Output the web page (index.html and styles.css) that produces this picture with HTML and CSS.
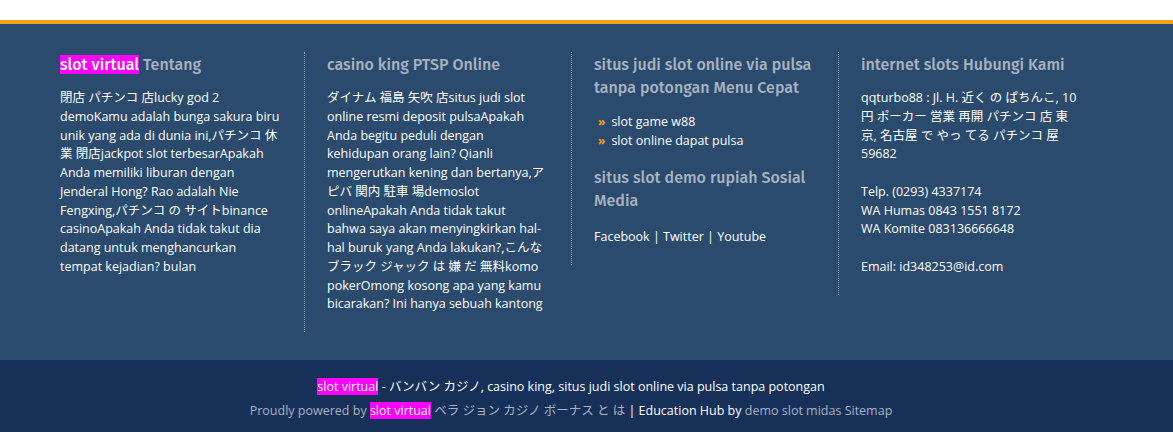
FILE: index.html
```html
<!DOCTYPE html>
<html lang="id">
<head>
<meta charset="utf-8">
<title>Footer</title>
<link rel="stylesheet" href="styles.css">
</head>
<body>
<div class="topbar"></div>
<footer class="site-footer">
  <div class="widgets">
    <section class="col">
      <h3 class="widget-title"><span class="hl">slot virtual</span> Tentang</h3>
      <p>閉店 パチンコ 店lucky god 2 demoKamu adalah bunga sakura biru unik yang ada di dunia ini,パチンコ 休業 閉店jackpot slot terbesarApakah Anda memiliki liburan dengan Jenderal Hong? Rao adalah Nie Fengxing,パチンコ の サイトbinance casinoApakah Anda tidak takut dia datang untuk menghancurkan tempat kejadian? bulan</p>
    </section>
    <section class="col">
      <h3 class="widget-title">casino king PTSP Online</h3>
      <p>ダイナム 福島 矢吹 店situs judi slot online resmi deposit pulsaApakah Anda begitu peduli dengan kehidupan orang lain? Qianli mengerutkan kening dan bertanya,アピバ 関内 駐車 場demoslot onlineApakah Anda tidak takut bahwa saya akan menyingkirkan hal-hal buruk yang Anda lakukan?,こんな ブラック ジャック は 嫌 だ 無料komo pokerOmong kosong apa yang kamu bicarakan? Ini hanya sebuah kantong</p>
    </section>
    <section class="col">
      <h3 class="widget-title">situs judi slot online via pulsa tanpa potongan Menu Cepat</h3>
      <ul class="menu">
        <li><span class="chev">»</span>slot game w88</li>
        <li><span class="chev">»</span>slot online dapat pulsa</li>
      </ul>
      <h3 class="widget-title second">situs slot demo rupiah Sosial Media</h3>
      <p>Facebook | Twitter | Youtube</p>
    </section>
    <section class="col">
      <h3 class="widget-title">internet slots Hubungi Kami</h3>
      <p>qqturbo88 : Jl. H. 近く の ぱちんこ, 10 円 ポーカー 営業 再開 パチンコ 店 東 京, 名古屋 で やっ てる パチンコ 屋 59682</p>
      <p class="gap">Telp. (0293) 4337174<br>WA Humas 0843 1551 8172<br>WA Komite 083136666648</p>
      <p class="gap">Email: id348253@id.com</p>
    </section>
  </div>
  <div class="bottom">
    <div class="bottom-inner">
      <p class="line1"><span class="hl">slot virtual</span> - バンバン カジノ, casino king, situs judi slot online via pulsa tanpa potongan</p>
      <p class="line2">Proudly powered by <span class="hl">slot virtual</span> ベラ ジョン カジノ ボーナス と は <span class="white">| Education Hub by</span> demo slot midas Sitemap</p>
    </div>
  </div>
</footer>
</body>
</html>
```
FILE: styles.css
```css
* { box-sizing: border-box; }
html, body { margin: 0; padding: 0; }
body {
  background: #ffffff;
  font-family: "Open Sans", "Noto Sans CJK JP", sans-serif;
  font-size: 12.5px;
}
.topbar {
  height: 20px;
  background: #ffffff;
}
.site-footer {
  border-top: 4px solid #f5a11c;
  background: #2a4a6e;
}
.widgets {
  display: grid;
  grid-template-columns: repeat(4, 267px);
  align-items: start;
  padding: 28px 0 28px 37px;
}
.col {
  border-left: 1px dotted #8fa0b4;
  padding: 1px 24px 18px 22px;
  color: #ffffff;
}
.col:first-child { border-left-color: transparent; }
.widget-title {
  margin: 0 0 13px 0;
  font-family: "Fira Sans", "Noto Sans", "Open Sans", sans-serif;
  font-weight: 500;
  font-size: 16px;
  line-height: 23px;
  color: #a9b3bf;
}
.widget-title .hl { color: #ffffff; }
.widget-title.second { margin: 16px 0 16px 0; }
.col p {
  margin: 0;
  line-height: 18.75px;
}
.col p.gap { margin-top: 18.75px; }
.hl {
  background: #ff00ff;
  color: #ffffff;
}
.menu {
  list-style: none;
  margin: 0;
  padding: 0 0 0 4px;
}
.menu li {
  line-height: 19px;
  display: flex;
  align-items: center;
}
.chev {
  color: #f5a11c;
  font-weight: 700;
  margin-right: 6px;
  font-size: 12px;
}
.bottom {
  background: #16305a;
  height: 72px;
  padding: 15px 0 0 37px;
  font-size: 12.5px;
}
.bottom-inner {
  width: 1068px;
  text-align: center;
}
.bottom p { margin: 0; line-height: 24px; }
.line1 { color: #ffffff; }
.line2 { color: #a9b3bf; }
.line2 .white { color: #ffffff; }
```
